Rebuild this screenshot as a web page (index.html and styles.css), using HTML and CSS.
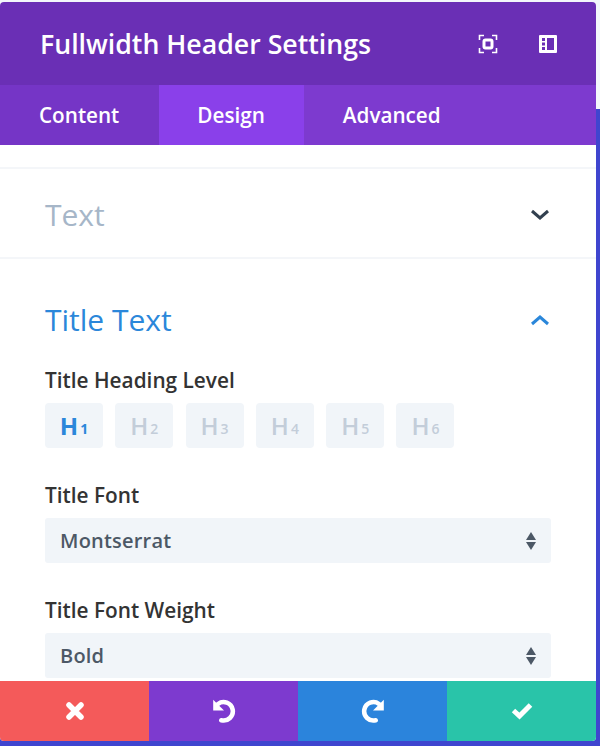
FILE: index.html
```html
<!DOCTYPE html>
<html lang="en">
<head>
  <meta charset="UTF-8" />
  <meta name="viewport" content="width=device-width, initial-scale=1.0"/>
  <title>Fullwidth Header Settings</title>
  <link rel="stylesheet" href="styles.css">
</head>
<body>

<div class="modal">
  <div class="modal-head">
    <h2>Fullwidth Header Settings</h2>
    <div class="head-icons">
      <svg width="20" height="20" viewBox="0 0 20 20" fill="none" stroke="#fff" stroke-width="1.6">
        <path d="M1.5 6V1.5H6M14 1.5h4.5V6M18.500 14v4.500H14M6 18.500H1.500V14"/>
        <rect x="6" y="6" width="8" height="8" rx="1.500" stroke-width="3"/>
      </svg>
      <svg width="20" height="20" viewBox="0 0 20 20">
        <path fill="#fff" fill-rule="evenodd" d="M2 1h16a1 1 0 0 1 1 1v16a1 1 0 0 1-1 1H2a1 1 0 0 1-1-1V2a1 1 0 0 1 1-1zM9 4v12h7V4zM4 4v3h3V4zM4 8.500v3h3v-3zM4 13v3h3v-3z"/>
      </svg>
    </div>
  </div>

  <div class="tabs">
    <div class="tab tab-first">Content</div>
    <div class="tab tab-active">Design</div>
    <div class="tab">Advanced</div>
  </div>

  <div class="modal-body">
    <div class="toggle toggle-closed">
      <h3>Text</h3>
      <svg class="chevron" width="20" height="12" viewBox="0 0 20 12" fill="none" stroke="#32404f" stroke-width="3"><path d="M2 2l8 7 8-7"/></svg>
    </div>

    <div class="toggle-open">
      <div class="toggle toggle-head">
        <h3>Title Text</h3>
        <svg class="chevron" width="20" height="12" viewBox="0 0 20 12" fill="none" stroke="#2b87da" stroke-width="3"><path d="M2 10l8-7 8 7"/></svg>
      </div>

      <label class="field-label">Title Heading Level</label>
      <div class="levels">
        <div class="level level-active">H<small>1</small></div>
        <div class="level">H<small>2</small></div>
        <div class="level">H<small>3</small></div>
        <div class="level">H<small>4</small></div>
        <div class="level">H<small>5</small></div>
        <div class="level">H<small>6</small></div>
      </div>

      <label class="field-label">Title Font</label>
      <div class="select">
        <span>Montserrat</span>
        <svg width="10" height="18" viewBox="0 0 10 18" fill="#4c5866"><path d="M5 0l5 8H0zM5 18L0 10h10z"/></svg>
      </div>

      <label class="field-label">Title Font Weight</label>
      <div class="select">
        <span>Bold</span>
        <svg width="10" height="18" viewBox="0 0 10 18" fill="#4c5866"><path d="M5 0l5 8H0zM5 18L0 10h10z"/></svg>
      </div>
    </div>
  </div>

  <div class="modal-foot">
    <div class="foot-btn btn-cancel">
      <svg width="20" height="20" viewBox="0 0 20 20" fill="none" stroke="#fff" stroke-width="5.500" stroke-linecap="round"><path d="M4 4l12 12M16 4L4 16"/></svg>
    </div>
    <div class="foot-btn btn-undo">
      <svg width="26" height="26" viewBox="0 0 24 24">
        <path d="M6.500 5.500a8.500 8.500 0 1 1 3 15" fill="none" stroke="#fff" stroke-width="4.200" stroke-linecap="round"/>
        <path d="M2 1.500v10h10z" fill="#fff"/>
      </svg>
    </div>
    <div class="foot-btn btn-redo">
      <svg width="26" height="26" viewBox="0 0 24 24">
        <path d="M17.500 5.500a8.500 8.500 0 1 0-3 15" fill="none" stroke="#fff" stroke-width="4.200" stroke-linecap="round"/>
        <path d="M22 1.500v10h-10z" fill="#fff"/>
      </svg>
    </div>
    <div class="foot-btn btn-save">
      <svg width="22" height="18" viewBox="0 0 22 18" fill="none" stroke="#fff" stroke-width="5"><path d="M2.500 8.500l6 5.500L19.500 3"/></svg>
    </div>
  </div>
</div>

</body>
</html>
```

FILE: styles.css
```css
body {
  font-family: "Open Sans", sans-serif;
  background: linear-gradient(180deg, #f3f7fb 109px, #3f45cf 109px);
  margin: 0;
  height: 746px;
  overflow: hidden;
  padding-top: 2px;
  box-sizing: border-box;
}
.modal {
  width: 596px;
  height: 739px;
  background: #fff;
  border-radius: 4px;
  overflow: hidden;
  display: flex;
  flex-direction: column;
}
.modal-head {
  height: 83px;
  flex: none;
  background: #6a2fb5;
  display: flex;
  justify-content: space-between;
  align-items: center;
  padding: 0 38px 0 40px;
  color: #fff;
}
h2 {
  margin: 0;
  font-size: 26.700px;
  font-weight: 600;
}
.head-icons {
  display: flex;
  gap: 40px;
}
.tabs {
  height: 60px;
  flex: none;
  background: #7d3acf;
  display: flex;
  color: #fff;
  font-size: 20.700px;
  font-weight: 600;
}
.tab {
  display: flex;
  align-items: center;
  padding: 0 39px;
}
.tab-first {
  background: #7535c6;
  padding-right: 40px;
}
.tab-active {
  background: #8a40ea;
  padding-left: 38px;
}
.modal-body {
  flex: 1;
  min-height: 0;
  overflow: hidden;
  padding-top: 22px;
}
.toggle {
  display: flex;
  justify-content: space-between;
  align-items: center;
  padding: 0 46px 0 45px;
}
.toggle-closed {
  height: 84px;
  padding-top: 4px;
  border-top: 2px solid #f4f6f9;
  border-bottom: 2px solid #f4f6f9;
}
.toggle-head {
  height: 38px;
  padding: 0 1px 0 0;
  margin-bottom: 27px;
}
h3 {
  margin: 0;
  font-size: 30px;
  font-weight: 400;
  line-height: 38px;
  color: #a6b6c8;
}
.toggle-head h3 {
  color: #2b87da;
}
.toggle-open {
  padding: 42px 45px 0;
}
.field-label {
  display: block;
  font-size: 20.800px;
  font-weight: 600;
  color: #333;
  line-height: 28px;
  margin-bottom: 9px;
}
.levels {
  display: flex;
  gap: 12.300px;
  margin-bottom: 33px;
}
.level {
  width: 58px;
  height: 45px;
  background: #f1f5f9;
  border-radius: 4px;
  display: flex;
  align-items: center;
  justify-content: center;
  font-size: 24px;
  font-weight: 600;
  color: #c3cdd9;
}
.level small {
  font-size: 14px;
  margin: 6px 0 0 2px;
}
.level-active {
  color: #2b87da;
  font-weight: 700;
}
.select {
  height: 45px;
  width: 506px;
  background: #f1f5f9;
  border-radius: 3px;
  display: flex;
  justify-content: space-between;
  align-items: center;
  padding: 0 15px;
  box-sizing: border-box;
  font-size: 20px;
  font-weight: 600;
  letter-spacing: 0.2px;
  color: #4c5866;
  margin-bottom: 33px;
}
.modal-foot {
  height: 60px;
  flex: none;
  display: flex;
}
.foot-btn {
  flex: 1;
  display: flex;
  align-items: center;
  justify-content: center;
}
.btn-cancel {
  background: #f45a5a;
}
.btn-undo {
  background: #7d3acf;
}
.btn-redo {
  background: #2b84dc;
}
.btn-save {
  background: #29c4a9;
}
```
